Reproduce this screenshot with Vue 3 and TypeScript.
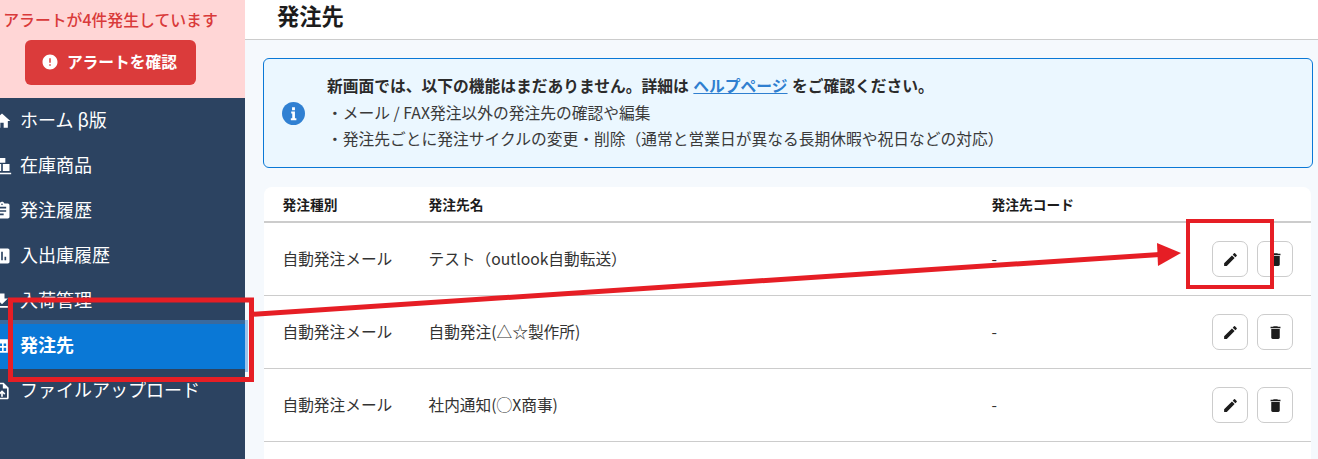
<template>
  <div class="page">
    <aside class="sidebar">
      <div class="alert">
        <p class="alert-text">アラートが4件発生しています</p>
        <button class="alert-btn">
          <svg viewBox="0 0 24 24" class="alert-icon"><path :d="icons.error" /></svg>
          アラートを確認
        </button>
      </div>
      <nav class="nav">
        <a v-for="item in navItems" :key="item.label" class="nav-item" :class="{ active: item.active }">
          <svg viewBox="0 0 24 24" class="nav-icon"><path :d="item.icon" /></svg>
          <span>{{ item.label }}</span>
        </a>
      </nav>
    </aside>

    <main class="main">
      <header class="header"><h1>発注先</h1></header>
      <div class="content">
        <section class="info">
          <svg viewBox="0 0 24 24" class="info-icon">
            <circle cx="12" cy="12" r="12" fill="#3080d2" />
            <path d="M9.6 10h3.9v7h1.5v2H9.2v-2h1.5v-5H9.6zM10.5 5.5h3v3h-3z" fill="#fff" />
          </svg>
          <div class="info-body">
            <p class="info-title">新画面では、以下の機能はまだありません。詳細は <a class="help">ヘルプページ</a> をご確認ください。</p>
            <p>・メール / FAX発注以外の発注先の確認や編集</p>
            <p>・発注先ごとに発注サイクルの変更・削除（通常と営業日が異なる長期休暇や祝日などの対応）</p>
          </div>
        </section>

        <section class="card">
          <div class="row head">
            <div>発注種別</div>
            <div>発注先名</div>
            <div>発注先コード</div>
            <div></div>
          </div>
          <div v-for="row in rows" :key="row.name" class="row">
            <div class="cell">{{ row.type }}</div>
            <div class="cell">{{ row.name }}</div>
            <div class="cell">{{ row.code }}</div>
            <div class="actions">
              <button class="icon-btn"><svg viewBox="0 0 24 24"><path :d="icons.edit" /></svg></button>
              <button class="icon-btn"><svg viewBox="0 0 24 24"><path :d="icons.trash" /></svg></button>
            </div>
          </div>
          <div class="row"></div>
        </section>
      </div>
    </main>

    <svg class="annotations" viewBox="0 0 1318 459">
      <rect class="box-nav" x="10.5" y="300" width="241" height="79.5" />
      <rect class="box-edit" x="1188" y="221" width="84" height="66" />
      <line x1="250" y1="314.5" x2="1160" y2="254.5" />
      <polygon points="1157,243 1181,253 1158,266" />
    </svg>
  </div>
</template>

<script setup lang="ts">
type NavItem = {
  label: string;
  icon: string;
  active?: boolean;
};

type OrderRow = {
  type: string;
  name: string;
  code: string;
};

const icons = {
  error: 'M12 2C6.48 2 2 6.48 2 12s4.48 10 10 10 10-4.48 10-10S17.52 2 12 2zm1 15h-2v-2h2v2zm0-4h-2V7h2v6z',
  edit: 'M3 17.25V21h3.75L17.81 9.94l-3.75-3.75L3 17.25zM20.71 7.04c.39-.39.39-1.02 0-1.41l-2.34-2.34a.9959.9959 0 0 0-1.41 0l-1.83 1.83 3.75 3.75 1.83-1.83z',
  trash: 'M6 19c0 1.1.9 2 2 2h8c1.1 0 2-.9 2-2V7H6v12zM19 4h-3.5l-1-1h-5l-1 1H5v2h14V4z',
};

const navItems: NavItem[] = [
  { label: 'ホーム β版', icon: 'M10 20v-6h4v6h5v-8h3L12 3 2 12h3v8z' },
  { label: '在庫商品', icon: 'M8 2.5h8V8H8zM3 9.5h8V18H3zM13 9.5h8V18h-8zM1 20h22v2H1z' },
  { label: '発注履歴', icon: 'M19 3h-4.18C14.4 1.84 13.3 1 12 1c-1.3 0-2.4.84-2.82 2H5c-1.1 0-2 .9-2 2v14c0 1.1.9 2 2 2h14c1.1 0 2-.9 2-2V5c0-1.1-.9-2-2-2zm-7 0c.55 0 1 .45 1 1s-.45 1-1 1-1-.45-1-1 .45-1 1-1zm2 14H7v-2h7v2zm3-4H7v-2h10v2zm0-4H7V7h10v2z' },
  { label: '入出庫履歴', icon: 'M19 3H5c-1.1 0-2 .9-2 2v14c0 1.1.9 2 2 2h14c1.1 0 2-.9 2-2V5c0-1.1-.9-2-2-2zM9 17H7v-7h2v7zm4 0h-2V7h2v10zm4 0h-2v-4h2v4z' },
  { label: '入荷管理', icon: 'M5 20h14v-2H5v2zM19 9h-4V3H9v6H5l7 7 7-7z' },
  { label: '発注先', icon: 'M1 4h18v16H1zM3 9v3h4V9zM9 9v3h3V9zM14 9v3h3V9zM3 14v4h4v-4zM9 14v4h3v-4zM14 14v4h3v-4z', active: true },
  { label: 'ファイルアップロード', icon: 'M14 2H6c-1.1 0-1.99.9-1.99 2L4 20c0 1.1.89 2 1.99 2H18c1.1 0 2-.9 2-2V8l-6-6zm4 18H6V4h7v5h5v11zM8 15.01l1.41 1.41L11 14.84V19h2v-4.16l1.59 1.59L16 15.01 12.01 11z' },
];

const rows: OrderRow[] = [
  { type: '自動発注メール', name: 'テスト（outlook自動転送）', code: '-' },
  { type: '自動発注メール', name: '自動発注(△☆製作所)', code: '-' },
  { type: '自動発注メール', name: '社内通知(◯X商事)', code: '-' },
];
</script>

<style>
html,
body {
  margin: 0;
  overflow: hidden;
}
</style>

<style scoped>
.page {
  position: relative;
  display: flex;
  width: 1318px;
  height: 459px;
  overflow: hidden;
  font-family: "Noto Sans CJK JP", "Noto Sans", sans-serif;
  color: #2b2b2b;
  background: #f5f9fd;
}

.sidebar {
  position: relative;
  z-index: 1;
  flex: 0 0 245px;
  background: #2c4361;
}

.alert {
  display: flex;
  flex-direction: column;
  align-items: center;
  box-sizing: border-box;
  height: 98px;
  padding: 9px 24px 0 0;
  background: #ffd6d6;
}

.alert-text {
  margin: 0;
  font-size: 15.85px;
  line-height: 21px;
  font-weight: 500;
  color: #d93a3a;
  white-space: nowrap;
}

.alert-btn {
  display: flex;
  align-items: center;
  justify-content: center;
  gap: 8px;
  width: 171px;
  height: 45px;
  margin-top: 10px;
  padding: 0 3px 2px 0;
  border: none;
  border-radius: 6px;
  font-family: inherit;
  font-size: 15.75px;
  font-weight: 700;
  color: #fff;
  background: #db3b3b;
}

.alert-icon {
  width: 18px;
  height: 18px;
  fill: #fff;
}

.nav {
  padding-top: 0.5px;
}

.nav-item {
  position: relative;
  display: flex;
  align-items: center;
  gap: 8.5px;
  height: 45px;
  font-size: 18px;
  color: #fff;
}

.nav-item span {
  padding-bottom: 4px;
}

.nav-icon {
  flex: none;
  width: 20px;
  height: 20px;
  margin-left: -8.5px;
  fill: #fff;
}

.nav-item.active {
  font-weight: 700;
  background: #0a78d6;
  box-shadow: 0 -4px 0 #3a6a9e;
}

.nav-item.active::after {
  content: "";
  position: absolute;
  top: -4px;
  bottom: -3px;
  left: 100%;
  width: 3px;
  background: #9cc4ec;
}

.main {
  flex: 1;
  min-width: 0;
}

.header {
  box-sizing: border-box;
  height: 40px;
  padding-left: 32px;
  border-bottom: 1px solid #cccccc;
  background: #fff;
}

.header h1 {
  margin: 0;
  font-size: 22.3px;
  line-height: 31px;
  font-weight: 700;
  color: #1c1c1c;
}

.content {
  padding: 18px 5px 0 18px;
}

.info {
  display: flex;
  align-items: center;
  gap: 22px;
  box-sizing: border-box;
  height: 110px;
  padding-left: 18px;
  border: 1px solid #0a78d6;
  border-radius: 6px;
  background: #ebf7ff;
}

.info-icon {
  flex: none;
  width: 23px;
  height: 23px;
}

.info-body p {
  margin: 0;
  font-size: 15.75px;
  line-height: 26.5px;
  white-space: nowrap;
  color: #3a3a3a;
}

.info-body .info-title {
  font-weight: 700;
  color: #2b2b2b;
}

.help {
  margin: 0 1px;
  color: #2f7fd0;
  text-decoration: underline;
}

.card {
  margin: 19px 2px 0 1px;
  border-radius: 8px 8px 0 0;
  background: #fff;
}

.row {
  display: grid;
  grid-template-columns: 146px 563px 1fr 100px;
  align-items: center;
  box-sizing: border-box;
  height: 73px;
  padding-left: 18.5px;
  border-bottom: 1px solid #cccccc;
  font-size: 15.7px;
  color: #333333;
}

.row.head {
  height: 36px;
  border-bottom: 2px solid #cccccc;
  font-size: 13.75px;
  font-weight: 700;
  color: #1c1c1c;
}

.cell {
  padding-bottom: 2px;
}

.actions {
  display: flex;
  justify-content: flex-end;
  gap: 9px;
  padding-right: 18px;
}

.icon-btn {
  display: flex;
  align-items: center;
  justify-content: center;
  width: 36px;
  height: 36px;
  padding: 0;
  border: 1px solid #cccccc;
  border-radius: 7px;
  background: #fff;
}

.icon-btn svg {
  width: 17px;
  height: 17px;
  fill: #1c1c1c;
}

.annotations {
  position: absolute;
  inset: 0;
  z-index: 2;
  width: 1318px;
  height: 459px;
  pointer-events: none;
}

.annotations rect {
  fill: none;
  stroke: #e61e25;
}

.box-nav {
  stroke-width: 5;
}

.box-edit {
  stroke-width: 4;
}

.annotations line {
  stroke: #e61e25;
  stroke-width: 5;
}

.annotations polygon {
  fill: #e61e25;
}
</style>
